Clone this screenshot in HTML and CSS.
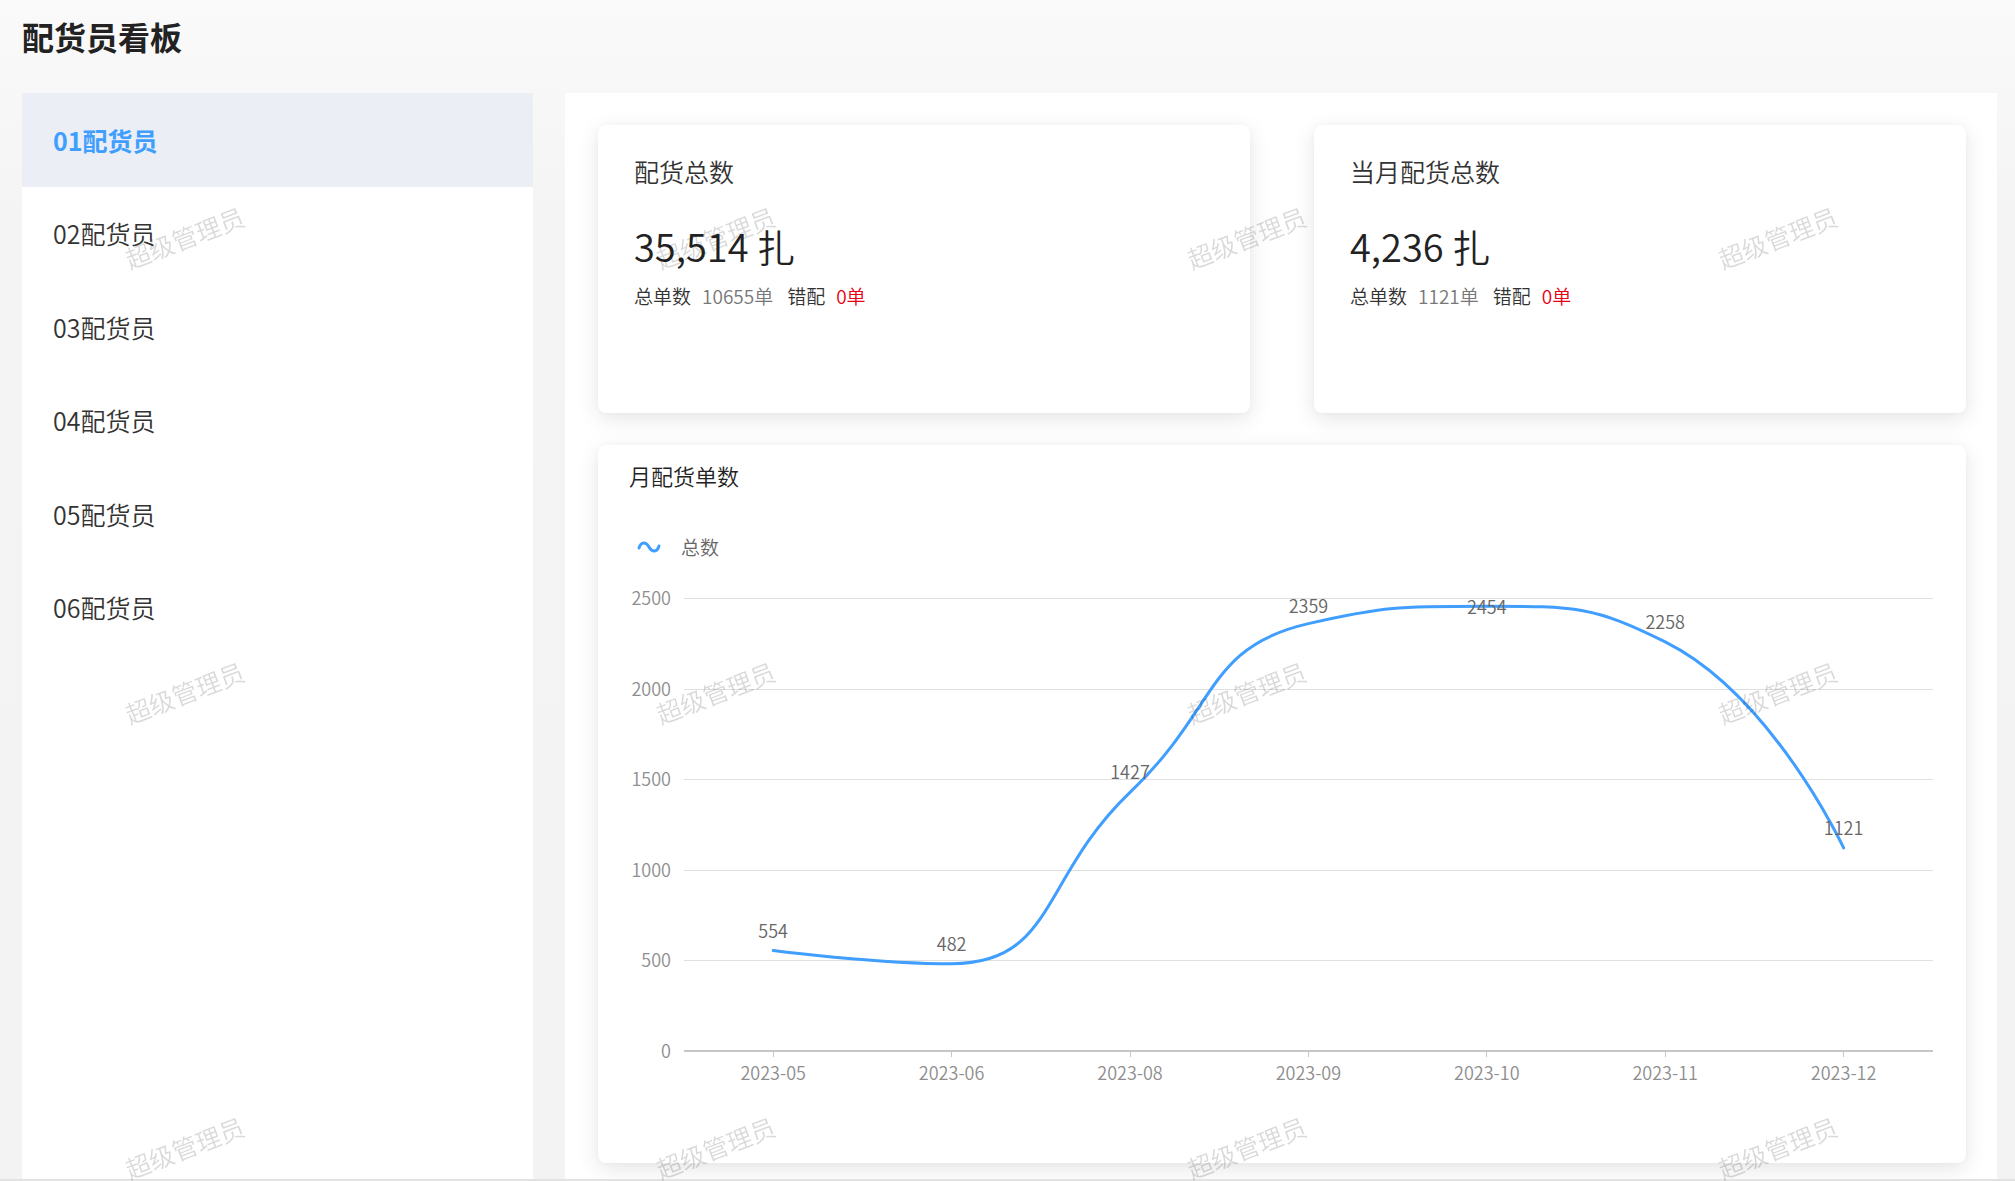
FILE: index.html
```html
<!DOCTYPE html>
<html lang="zh-CN">
<head>
<meta charset="utf-8">
<title>配货员看板</title>
<link rel="stylesheet" href="styles.css">
</head>
<body>
<div class="page">
  <h1 class="page-title">配货员看板</h1>
  <div class="layout">
    <aside class="sidebar">
      <ul class="menu">
        <li class="menu-item active">01配货员</li>
        <li class="menu-item">02配货员</li>
        <li class="menu-item">03配货员</li>
        <li class="menu-item">04配货员</li>
        <li class="menu-item">05配货员</li>
        <li class="menu-item">06配货员</li>
      </ul>
    </aside>
    <main class="panel">
      <div class="stats">
        <section class="card stat-card">
          <div class="stat-title">配货总数</div>
          <div class="stat-value">35,514 扎</div>
          <div class="stat-meta"><span class="meta-label">总单数</span><span class="meta-value">10655单</span><span class="meta-label">错配</span><span class="meta-error">0单</span></div>
        </section>
        <section class="card stat-card">
          <div class="stat-title">当月配货总数</div>
          <div class="stat-value">4,236 扎</div>
          <div class="stat-meta"><span class="meta-label">总单数</span><span class="meta-value">1121单</span><span class="meta-label">错配</span><span class="meta-error">0单</span></div>
        </section>
      </div>
      <section class="card chart-card">
        <div class="chart-title">月配货单数</div>
        <svg class="chart" width="1366" height="663" viewBox="0 0 1366 663">
          <path class="legend-icon" d="M41,48 C43,41.5 48,41.5 51,47 C54,52.5 59,52.5 61,46"/>
          <text class="legend-text" x="83" y="46" dominant-baseline="central">总数</text>
          <g class="grid">
            <line x1="86" x2="1335" y1="98.5" y2="98.5"/>
            <line x1="86" x2="1335" y1="189.5" y2="189.5"/>
            <line x1="86" x2="1335" y1="279.5" y2="279.5"/>
            <line x1="86" x2="1335" y1="370.5" y2="370.5"/>
            <line x1="86" x2="1335" y1="460.5" y2="460.5"/>
          </g>
          <line class="axis" x1="86" x2="1335" y1="551" y2="551"/>
          <g class="ticks">
            <line x1="175.5" x2="175.5" y1="552" y2="557"/>
            <line x1="353.5" x2="353.5" y1="552" y2="557"/>
            <line x1="532.5" x2="532.5" y1="552" y2="557"/>
            <line x1="710.5" x2="710.5" y1="552" y2="557"/>
            <line x1="888.5" x2="888.5" y1="552" y2="557"/>
            <line x1="1067.5" x2="1067.5" y1="552" y2="557"/>
            <line x1="1245.5" x2="1245.5" y1="552" y2="557"/>
          </g>
          <g class="y-labels" text-anchor="end" dominant-baseline="central">
            <text x="73" y="97">2500</text>
            <text x="73" y="188">2000</text>
            <text x="73" y="278">1500</text>
            <text x="73" y="369">1000</text>
            <text x="73" y="459">500</text>
            <text x="73" y="550">0</text>
          </g>
          <g class="x-labels" text-anchor="middle" dominant-baseline="central">
            <text x="175.2" y="572">2023-05</text>
            <text x="353.6" y="572">2023-06</text>
            <text x="532" y="572">2023-08</text>
            <text x="710.4" y="572">2023-09</text>
            <text x="888.8" y="572">2023-10</text>
            <text x="1067.2" y="572">2023-11</text>
            <text x="1245.6" y="572">2023-12</text>
          </g>
          <path class="series" d="M175.2,450.6 C175.2,450.6 278.72,463.7 353.6,463.7 C457.13,463.7 442.48,377.73 532,292.4 C620.89,207.67 607.26,147.3 710.4,123.6 C785.67,106.3 800.26,106.3 888.8,106.3 C978.66,106.3 995.78,106.3 1067.2,141.9 C1174.18,195.23 1245.6,347.9 1245.6,347.9"/>
          <g class="data-labels" text-anchor="middle" dominant-baseline="central">
            <text x="175.2" y="429.6">554</text>
            <text x="353.6" y="442.7">482</text>
            <text x="532" y="271.4">1427</text>
            <text x="710.4" y="105">2359</text>
            <text x="888.8" y="106">2454</text>
            <text x="1067.2" y="120.9">2258</text>
            <text x="1245.6" y="326.9">1121</text>
          </g>
        </svg>
      </section>
    </main>
  </div>
</div>
<div class="watermarks" aria-hidden="true">
  <span>超级管理员</span><span>超级管理员</span><span>超级管理员</span><span>超级管理员</span>
  <span>超级管理员</span><span>超级管理员</span><span>超级管理员</span><span>超级管理员</span>
  <span>超级管理员</span><span>超级管理员</span><span>超级管理员</span><span>超级管理员</span>
</div>
</body>
</html>
```

FILE: styles.css
```css
* { box-sizing: border-box; }

html, body {
  margin: 0;
  height: 100%;
  overflow: hidden;
}

body {
  font-family: "Noto Sans CJK SC", "Noto Sans", sans-serif;
  font-weight: 350;
  color: #333;
  background: linear-gradient(180deg, #fafafa 0%, #f4f4f4 220px, #f3f3f3 100%);
}

body::after {
  content: "";
  position: fixed;
  left: 0;
  right: 0;
  bottom: 0;
  height: 2px;
  background: #e2e2e2;
}

.page {
  padding: 0 18px 0 22px;
}

.page-title {
  margin: 0 0 34px;
  padding-top: 14px;
  font-size: 32px;
  line-height: 45px;
  font-weight: 700;
  color: #222;
}

.layout {
  display: flex;
  gap: 32px;
  align-items: stretch;
}

.sidebar {
  width: 511px;
  flex: none;
  background: #fff;
}

.menu {
  list-style: none;
  margin: 0;
  padding: 0;
}

.menu-item {
  height: 93.5px;
  display: flex;
  align-items: center;
  padding-left: 31px;
  font-size: 25px;
  color: #333;
}

.menu-item.active {
  background: #ebeef5;
  color: #409eff;
  font-weight: 700;
}

.panel {
  flex: 1;
  background: #fff;
  padding: 32px 31px 32px 33px;
}

.stats {
  display: grid;
  grid-template-columns: 1fr 1fr;
  gap: 64px;
  margin-bottom: 32px;
}

.card {
  background: #fff;
  border-radius: 8px;
  box-shadow: 0 6px 22px rgba(0, 0, 0, 0.10), 0 0 6px rgba(0, 0, 0, 0.03);
}

.stat-card {
  height: 288px;
  padding: 28px 36px 0;
}

.stat-title {
  font-size: 25px;
  line-height: 36px;
  color: #333;
  margin-bottom: 32px;
}

.stat-value {
  font-size: 38px;
  line-height: 50px;
  color: #222;
  margin-bottom: 11px;
}

.stat-meta {
  font-size: 19px;
  line-height: 28px;
  display: flex;
}

.meta-label {
  color: #333;
  margin-right: 11px;
}

.meta-value {
  color: #777;
  margin-right: 14px;
}

.meta-error {
  color: #e60012;
}

.chart-card {
  height: 718px;
  padding-top: 15px;
}

.chart-title {
  padding-left: 31px;
  font-size: 22px;
  line-height: 30px;
  color: #222;
}

.chart {
  display: block;
  margin-top: 10px;
}

.legend-icon {
  fill: none;
  stroke: #409eff;
  stroke-width: 3;
  stroke-linecap: round;
}

.legend-text {
  font-size: 19px;
  fill: #666;
}

.grid line {
  stroke: #e0e0e0;
  stroke-width: 1;
}

.axis {
  stroke: #c6c6c6;
  stroke-width: 2;
}

.ticks line {
  stroke: #c6c6c6;
  stroke-width: 1;
}

.y-labels text,
.x-labels text {
  font-size: 18px;
  fill: #8e8e8e;
}

.data-labels text {
  font-size: 18px;
  fill: #666;
}

.series {
  fill: none;
  stroke: #409eff;
  stroke-width: 3;
  stroke-linejoin: round;
  stroke-linecap: round;
}

.watermarks {
  position: fixed;
  top: 10px;
  left: -81px;
  display: grid;
  grid-template-columns: repeat(4, 531px);
  grid-template-rows: repeat(3, 455px);
  place-items: center;
  pointer-events: none;
  z-index: 10;
}

.watermarks span {
  font-size: 25px;
  line-height: 1;
  color: rgba(0, 0, 0, 0.15);
  transform: rotate(-21deg);
  white-space: nowrap;
}
```
